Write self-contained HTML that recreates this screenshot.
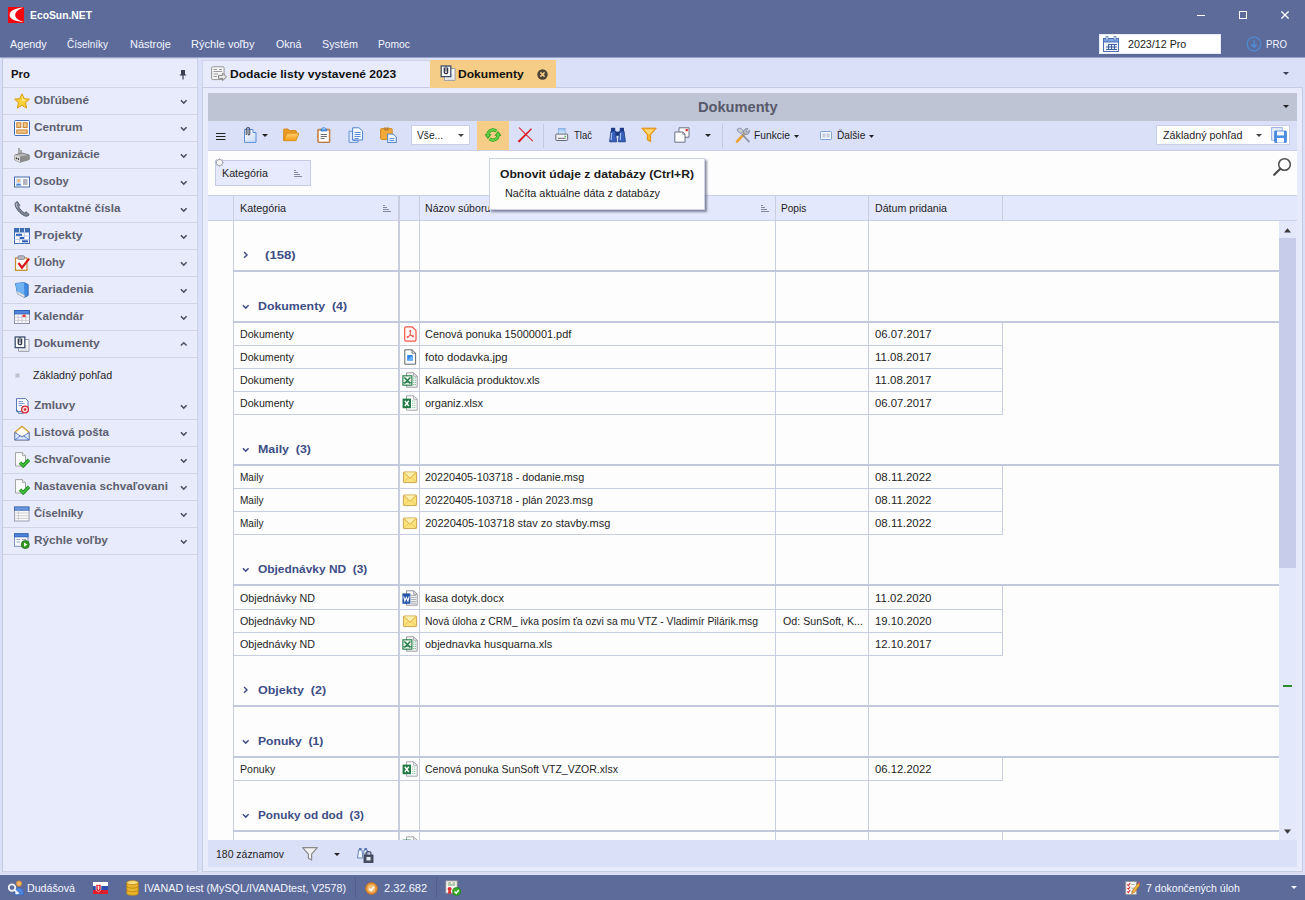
<!DOCTYPE html>
<html lang="sk">
<head>
<meta charset="utf-8">
<title>EcoSun.NET</title>
<style>
html,body{margin:0;padding:0;}
body{width:1305px;height:900px;overflow:hidden;position:relative;background:#d9e0f7;font-family:"Liberation Sans",sans-serif;font-size:11px;color:#1e1e1e;}
div,span,svg{position:absolute;box-sizing:border-box;}
.t{white-space:nowrap;line-height:16px;height:16px;transform-origin:0 50%;}
.hdr{left:0;top:0;width:1305px;height:58px;background:#5d6b9b;border-bottom:1px solid #98a2c6;}
.status{left:0;top:875px;width:1305px;height:25px;background:#5d6b9b;}
.side{left:2px;top:58px;width:196px;height:814px;background:#e7ebfc;border:1px solid #cbd1e8;border-left-color:#c3c9e0;}
.srow{left:0;width:194px;height:1px;background:#d0d5e8;}
.tabs{left:202px;top:58px;width:1101px;height:30px;background:#d9e0f7;}
.taboff{left:202px;top:60px;width:228px;height:28px;background:#e7ebfc;border:1px solid #cdd3ea;border-bottom:none;border-right:none;}
.tabon{left:430px;top:60px;width:126px;height:28px;background:#f6cd86;}
.content{left:202px;top:87px;width:1101px;height:785px;background:#e7ebfc;border:1px solid #c6cce4;}
.gtitle{left:208px;top:93px;width:1089px;height:28px;background:#bec4d4;}
.tbar{left:208px;top:121px;width:1089px;height:29px;background:#d9e0f8;}
.gpanel{left:208px;top:150px;width:1089px;height:45px;background:#fdfdfd;border-top:1px solid #c9cfe6;}
.ghead{left:208px;top:195px;width:1089px;height:26px;background:#e3e8fc;border-top:1px solid #c9cfe6;border-bottom:1px solid #c9cfe6;}
.grid{left:208px;top:221px;width:1071px;height:619px;background:#fdfdfd;overflow:hidden;}
.vl{width:1px;background:#c8cde0;}
.hl{height:1px;background:#c8cde0;}
.hl2{height:2px;background:#c3c9dc;}
.foot{left:208px;top:840px;width:1089px;height:27px;background:#d9e0f8;}
.sbar{left:1279px;top:221px;width:17px;height:619px;background:#e3e8fb;}
.thumb{left:1279px;top:238px;width:17px;height:330px;background:#c6cce9;}
.box{background:#fff;border:1px solid #c9cfe6;}

</style>
</head>
<body>
<div class="hdr"></div>
<svg style="left:8px;top:7px" width="16" height="16" viewBox="0 0 16 16"><rect width="16" height="16" fill="#f4060c"/><path d="M15.6 0.4 C8 0.8 1.6 3.6 1.6 8 C1.6 12 8 14.8 15.8 14.9 C10.6 13.4 7.2 11.2 7.2 8 C7.2 4.8 10.4 2.2 15.6 0.4 Z" fill="#fff"/></svg>
<span class="t" style="left:29.5px;top:7.0px;font-size:11px;color:#ffffff;font-weight:bold;transform:scaleX(0.9392);">EcoSun.NET</span>
<span class="t" style="left:9.6px;top:36.3px;font-size:11px;color:#f4f6ff;transform:scaleX(0.9836);">Agendy</span>
<span class="t" style="left:67.3px;top:36.3px;font-size:11px;color:#f4f6ff;transform:scaleX(0.9039);">Číselníky</span>
<span class="t" style="left:129.5px;top:36.3px;font-size:11px;color:#f4f6ff;transform:scaleX(0.9983);">Nástroje</span>
<span class="t" style="left:191.4px;top:36.3px;font-size:11px;color:#f4f6ff;transform:scaleX(1.0059);">Rýchle voľby</span>
<span class="t" style="left:275.6px;top:36.3px;font-size:11px;color:#f4f6ff;transform:scaleX(0.9621);">Okná</span>
<span class="t" style="left:321.7px;top:36.3px;font-size:11px;color:#f4f6ff;transform:scaleX(0.9785);">Systém</span>
<span class="t" style="left:377.5px;top:36.3px;font-size:11px;color:#f4f6ff;transform:scaleX(0.9314);">Pomoc</span>
<svg style="left:1197px;top:15px" width="8" height="1" viewBox="0 0 8 1"><rect width="8" height="1" fill="#fff"/></svg>
<svg style="left:1239px;top:11px" width="8" height="8" viewBox="0 0 8 8"><rect x="0.5" y="0.5" width="7" height="7" fill="none" stroke="#fff" stroke-width="1"/></svg>
<svg style="left:1281px;top:11px" width="8" height="8" viewBox="0 0 8 8"><path d="M0.4 0.4 L7.6 7.6 M7.6 0.4 L0.4 7.6" stroke="#fff" stroke-width="1.25"/></svg>
<div class="box" style="left:1098.5px;top:34px;width:122.5px;height:20px;border-color:#e8ebf7"></div>
<svg style="left:1103px;top:36px" width="16" height="16" viewBox="0 0 16 16"><rect x="0.5" y="2.5" width="15" height="13" fill="#f2f5fc" stroke="#4a6fb5"/><rect x="0.5" y="2.5" width="15" height="3.5" fill="#7fa4e0" stroke="#4a6fb5"/><rect x="3" y="0.5" width="2" height="3.5" fill="#dfe6f5" stroke="#4a6fb5" stroke-width="0.6"/><rect x="11" y="0.5" width="2" height="3.5" fill="#dfe6f5" stroke="#4a6fb5" stroke-width="0.6"/><path d="M5 8.5 H14 M3 11 H14 M3 13.5 H14 M5.5 8.5 V13.5 M8.5 8.5 V13.5 M11.5 8.5 V13.5" stroke="#3f62a8" stroke-width="1.1" fill="none"/></svg>
<span class="t" style="left:1127.7px;top:36.4px;font-size:11px;color:#1a1a1a;transform:scaleX(0.9727);">2023/12 Pro</span>
<svg style="left:1246px;top:36px" width="16" height="16" viewBox="0 0 16 16"><circle cx="8" cy="8" r="6.8" fill="none" stroke="#4f8bd2" stroke-width="1.2"/><path d="M8 4 V11 M5.2 8.2 L8 11.3 L10.8 8.2" fill="none" stroke="#4f8bd2" stroke-width="1.6"/></svg>
<span class="t" style="left:1265.6px;top:36.3px;font-size:11px;color:#f4f6ff;transform:scaleX(0.8765);">PRO</span>
<div class="side">
<div class="srow" style="top:28px"></div>
<div class="srow" style="top:55px"></div>
<div class="srow" style="top:82px"></div>
<div class="srow" style="top:109px"></div>
<div class="srow" style="top:136px"></div>
<div class="srow" style="top:163px"></div>
<div class="srow" style="top:190px"></div>
<div class="srow" style="top:217px"></div>
<div class="srow" style="top:244px"></div>
<div class="srow" style="top:271px"></div>
<div class="srow" style="top:298px"></div>
<div class="srow" style="top:360px"></div>
<div class="srow" style="top:387px"></div>
<div class="srow" style="top:414px"></div>
<div class="srow" style="top:441px"></div>
<div class="srow" style="top:468px"></div>
<div class="srow" style="top:495px"></div>
</div>
<span class="t" style="left:11.1px;top:66.0px;font-size:11px;color:#111;font-weight:bold;transform:scaleX(1.0303);">Pro</span>
<svg style="left:179px;top:70px" width="8" height="10" viewBox="0 0 8 10"><path d="M2 0.5 H6 M2.6 0.5 V4.6 M5.4 0.5 V4.6 M0.8 5 H7.2 M4 5 V9.5" stroke="#3a3f55" stroke-width="1.2" fill="none"/><rect x="2.6" y="0.5" width="2.8" height="4.4" fill="#3a3f55"/></svg>
<span class="t" style="left:34.1px;top:92.4px;font-size:11px;color:#5d5f6e;font-weight:bold;transform:scaleX(1.0577);">Obľúbené</span>
<svg style="left:14px;top:93px" width="16" height="16" viewBox="0 0 16 16"><path d="M8 0.8 L10.2 5.6 L15.4 6.2 L11.5 9.7 L12.6 15 L8 12.3 L3.4 15 L4.5 9.7 L0.6 6.2 L5.8 5.6 Z" fill="#fbd23a" stroke="#d89a10" stroke-width="1" stroke-linejoin="round"/><path d="M8 3 L9.5 6.4 L13 6.9 L8 8 Z" fill="#fff2a8" opacity="0.8"/></svg>
<svg style="left:180.1px;top:98.8px" width="8" height="6" viewBox="0 0 8 6"><path d="M0.9 1.2 L3.75 4.1 L6.6 1.2" fill="none" stroke="#4a4f63" stroke-width="1.45"/></svg>
<span class="t" style="left:34.1px;top:119.4px;font-size:11px;color:#5d5f6e;font-weight:bold;transform:scaleX(1.0744);">Centrum</span>
<svg style="left:14px;top:120px" width="16" height="16" viewBox="0 0 16 16"><rect x="0.5" y="0.5" width="15" height="15" rx="1" fill="#f7f9ff" stroke="#3f6db5"/><rect x="2.8" y="2.8" width="4" height="4.6" fill="#f3c98a" stroke="#c9802b" stroke-width="1"/><rect x="9.2" y="2.8" width="4" height="4.6" fill="#f3c98a" stroke="#c9802b" stroke-width="1"/><rect x="2.8" y="10" width="10.4" height="3.2" fill="#f3c98a" stroke="#c9802b" stroke-width="1"/></svg>
<svg style="left:180.1px;top:125.8px" width="8" height="6" viewBox="0 0 8 6"><path d="M0.9 1.2 L3.75 4.1 L6.6 1.2" fill="none" stroke="#4a4f63" stroke-width="1.45"/></svg>
<span class="t" style="left:34.1px;top:146.4px;font-size:11px;color:#5d5f6e;font-weight:bold;transform:scaleX(1.0552);">Organizácie</span>
<svg style="left:14px;top:147px" width="16" height="16" viewBox="0 0 16 16"><path d="M5 1 V7 M7 3 V7" stroke="#8a8a8a" stroke-width="1.3"/><path d="M0.8 8 L8 6 L15.2 8 V12.5 L6 15.2 L0.8 13 Z" fill="#b9b9b9" stroke="#6d6d6d" stroke-width="0.8"/><path d="M6 9.6 L15.2 8 V12.5 L6 15.2 Z" fill="#8d8d8d"/><path d="M0.8 8 L6 9.6 V15.2 L0.8 13 Z" fill="#d9d9d9"/><rect x="1.8" y="10.5" width="1.3" height="1.6" fill="#333"/><rect x="3.8" y="11.2" width="1.3" height="1.6" fill="#333"/></svg>
<svg style="left:180.1px;top:152.8px" width="8" height="6" viewBox="0 0 8 6"><path d="M0.9 1.2 L3.75 4.1 L6.6 1.2" fill="none" stroke="#4a4f63" stroke-width="1.45"/></svg>
<span class="t" style="left:34.1px;top:173.4px;font-size:11px;color:#5d5f6e;font-weight:bold;transform:scaleX(1.0136);">Osoby</span>
<svg style="left:14px;top:174px" width="16" height="16" viewBox="0 0 16 16"><rect x="0.5" y="3" width="15" height="10" fill="#fbfcff" stroke="#4a6caa"/><rect x="2" y="4.5" width="5.2" height="7" fill="#cfe0f7"/><circle cx="4.6" cy="6.6" r="1.6" fill="#e9b27a"/><path d="M2 11.5 C2 9 7.2 9 7.2 11.5 Z" fill="#3f7fd0"/><path d="M9 6 H13.5 M9 8 H13.5 M9 10 H13.5" stroke="#6a6f80" stroke-width="1"/></svg>
<svg style="left:180.1px;top:179.8px" width="8" height="6" viewBox="0 0 8 6"><path d="M0.9 1.2 L3.75 4.1 L6.6 1.2" fill="none" stroke="#4a4f63" stroke-width="1.45"/></svg>
<span class="t" style="left:34.1px;top:200.4px;font-size:11px;color:#5d5f6e;font-weight:bold;transform:scaleX(1.0638);">Kontaktné čísla</span>
<svg style="left:14px;top:201px" width="16" height="16" viewBox="0 0 16 16"><path d="M2 1.2 C0.6 2.2 0.8 4.5 2.3 7 C4 10 7 13.2 10.5 14.8 C12.6 15.6 14.6 15 15.2 13.6 L12.2 10.8 L10.4 12 C8.4 11 5.6 8 4.6 5.8 L5.8 4.4 L3.6 0.8 Z" fill="#7d8794" stroke="#4d5663" stroke-width="0.9" stroke-linejoin="round"/><path d="M2.6 2 C1.8 3 2.4 5 3.4 6.6" stroke="#c4cbd4" stroke-width="0.9" fill="none"/></svg>
<svg style="left:180.1px;top:206.8px" width="8" height="6" viewBox="0 0 8 6"><path d="M0.9 1.2 L3.75 4.1 L6.6 1.2" fill="none" stroke="#4a4f63" stroke-width="1.45"/></svg>
<span class="t" style="left:34.1px;top:227.4px;font-size:11px;color:#5d5f6e;font-weight:bold;transform:scaleX(1.1193);">Projekty</span>
<svg style="left:14px;top:228px" width="16" height="16" viewBox="0 0 16 16"><rect x="0.5" y="0.5" width="15" height="15" fill="#fdfdff" stroke="#3f6db5"/><rect x="0.5" y="0.5" width="15" height="4" fill="#3f6db5"/><path d="M5.5 0.5 V15.5 M10.5 0.5 V15.5 M0.5 8 H15.5 M0.5 11.5 H15.5" stroke="#b5c4e2" stroke-width="0.8"/><path d="M5.5 0.5 V4.5 M10.5 0.5 V4.5" stroke="#dfe8f8" stroke-width="0.8"/><rect x="2" y="5.8" width="6" height="2" fill="#2f62b8"/><rect x="6" y="9" width="4" height="2" fill="#2f62b8"/><rect x="8" y="12.3" width="6" height="2" fill="#2f62b8"/></svg>
<svg style="left:180.1px;top:233.8px" width="8" height="6" viewBox="0 0 8 6"><path d="M0.9 1.2 L3.75 4.1 L6.6 1.2" fill="none" stroke="#4a4f63" stroke-width="1.45"/></svg>
<span class="t" style="left:34.1px;top:254.4px;font-size:11px;color:#5d5f6e;font-weight:bold;transform:scaleX(1.0176);">Úlohy</span>
<svg style="left:14px;top:255px" width="16" height="16" viewBox="0 0 16 16"><rect x="1.5" y="3" width="11.5" height="12.3" fill="#fdfbf5" stroke="#c38a2e" stroke-width="1.2"/><rect x="4" y="0.8" width="6.5" height="3.6" rx="1" fill="#b9b9c8" stroke="#7c7c92" stroke-width="0.8"/><path d="M4.5 8 L8 12.6 L15.2 3.6" stroke="#d9141c" stroke-width="2.2" fill="none"/></svg>
<svg style="left:180.1px;top:260.8px" width="8" height="6" viewBox="0 0 8 6"><path d="M0.9 1.2 L3.75 4.1 L6.6 1.2" fill="none" stroke="#4a4f63" stroke-width="1.45"/></svg>
<span class="t" style="left:34.1px;top:281.4px;font-size:11px;color:#5d5f6e;font-weight:bold;transform:scaleX(1.0812);">Zariadenia</span>
<svg style="left:14px;top:282px" width="16" height="16" viewBox="0 0 16 16"><path d="M1.5 1.5 L10 0.6 L14.2 2.6 V13.4 L10.4 15.4 L3.5 11.6 Z" fill="#3f8be0" stroke="#2a62b0" stroke-width="0.8" stroke-linejoin="round"/><path d="M1.5 1.5 L10 0.6 L10.4 15.4 L3.5 11.6 Z" fill="#6fb3f3"/><path d="M3.5 11.6 L10.4 15.4 L10.4 13.2 L3.2 9.6 Z" fill="#f1f1f1" stroke="#b5b5b5" stroke-width="0.5"/></svg>
<svg style="left:180.1px;top:287.8px" width="8" height="6" viewBox="0 0 8 6"><path d="M0.9 1.2 L3.75 4.1 L6.6 1.2" fill="none" stroke="#4a4f63" stroke-width="1.45"/></svg>
<span class="t" style="left:34.1px;top:308.4px;font-size:11px;color:#5d5f6e;font-weight:bold;transform:scaleX(1.0599);">Kalendár</span>
<svg style="left:14px;top:309px" width="16" height="16" viewBox="0 0 16 16"><rect x="0.5" y="1.5" width="15" height="13" fill="#fbfbfd" stroke="#8b8fa5"/><rect x="0.5" y="1.5" width="15" height="3.4" fill="#4f86dc" stroke="#2f62b8"/><path d="M0.5 8.2 H15.5 M0.5 11.4 H15.5 M4.2 5 V14.5 M8 5 V14.5 M11.8 5 V14.5" stroke="#c5c7d2" stroke-width="0.9"/><rect x="8.6" y="5.6" width="3" height="2.4" fill="#e03a3a"/></svg>
<svg style="left:180.1px;top:314.8px" width="8" height="6" viewBox="0 0 8 6"><path d="M0.9 1.2 L3.75 4.1 L6.6 1.2" fill="none" stroke="#4a4f63" stroke-width="1.45"/></svg>
<span class="t" style="left:34.1px;top:335.4px;font-size:11px;color:#5d5f6e;font-weight:bold;transform:scaleX(1.0984);">Dokumenty</span>
<svg style="left:14px;top:336px" width="16" height="16" viewBox="0 0 16 16"><path d="M4.5 3.5 H15 V15.4 H4.5 Z" fill="#fafafa" stroke="#8f95a6" stroke-width="0.9"/><path d="M6.5 10 H13.5 M6.5 12 H13.5 M6.5 14 H13.5" stroke="#c5c8d2" stroke-width="0.8"/><rect x="1.2" y="1" width="9.6" height="10.6" fill="#fdfdfd" stroke="#3e4f6a" stroke-width="1.3"/><path d="M4.3 2.6 V7.6 C4.3 9 7.6 9 7.6 7.6 V2.6" fill="none" stroke="#2b3346" stroke-width="1.3"/><path d="M6 1 V6.6" stroke="#2b3346" stroke-width="1"/></svg>
<svg style="left:180.1px;top:341.4px" width="8" height="6" viewBox="0 0 8 6"><path d="M0.9 4.6 L3.75 1.7 L6.6 4.6" fill="none" stroke="#4a4f63" stroke-width="1.45"/></svg>
<span class="t" style="left:34.1px;top:397.4px;font-size:11px;color:#5d5f6e;font-weight:bold;transform:scaleX(1.0697);">Zmluvy</span>
<svg style="left:14px;top:398px" width="16" height="16" viewBox="0 0 16 16"><path d="M2.5 0.6 H11.5 L14 3 V13.5 H2.5 Z" fill="#fdfdff" stroke="#4a6caa" stroke-width="0.9"/><path d="M4.5 3.5 H9 M4.5 5.5 H10.5 M4.5 7.5 H8" stroke="#7f9bd0" stroke-width="1"/><path d="M2.5 11 L4.5 15.3 H9.5" fill="none" stroke="#4a6caa" stroke-width="0.9"/><circle cx="11" cy="11.5" r="3.4" fill="#fbe3e3" stroke="#d8262c" stroke-width="1.3"/><circle cx="11" cy="11.5" r="1.3" fill="#d8262c"/></svg>
<svg style="left:180.1px;top:403.8px" width="8" height="6" viewBox="0 0 8 6"><path d="M0.9 1.2 L3.75 4.1 L6.6 1.2" fill="none" stroke="#4a4f63" stroke-width="1.45"/></svg>
<span class="t" style="left:34.1px;top:424.4px;font-size:11px;color:#5d5f6e;font-weight:bold;transform:scaleX(1.0591);">Listová pošta</span>
<svg style="left:14px;top:425px" width="16" height="16" viewBox="0 0 16 16"><path d="M0.8 7 L8 1 L15.2 7 V15 H0.8 Z" fill="#f6c860" stroke="#c58a1e" stroke-width="0.9" stroke-linejoin="round"/><path d="M2.5 6.5 L8 2.4 L13.5 6.5 V11 H2.5 Z" fill="#fffdf5" stroke="#d9b36a" stroke-width="0.6"/><path d="M0.8 7.5 L8 12 L15.2 7.5 V15 H0.8 Z" fill="#dfe9fb" stroke="#4f74c4" stroke-width="0.9" stroke-linejoin="round"/><path d="M0.8 15 L6.4 10.8 M15.2 15 L9.6 10.8" stroke="#4f74c4" stroke-width="0.9"/></svg>
<svg style="left:180.1px;top:430.8px" width="8" height="6" viewBox="0 0 8 6"><path d="M0.9 1.2 L3.75 4.1 L6.6 1.2" fill="none" stroke="#4a4f63" stroke-width="1.45"/></svg>
<span class="t" style="left:34.1px;top:451.4px;font-size:11px;color:#5d5f6e;font-weight:bold;transform:scaleX(1.0713);">Schvaľovanie</span>
<svg style="left:14px;top:452px" width="16" height="16" viewBox="0 0 16 16"><path d="M1.5 0.6 H8.5 L11.5 3.6 V14 H1.5 Z" fill="#fcfcfc" stroke="#9a9a9a" stroke-width="0.9"/><path d="M8.5 0.6 V3.6 H11.5" fill="#e9e9e9" stroke="#9a9a9a" stroke-width="0.8"/><path d="M6 10.6 L9.2 13.8 L15 7.8" stroke="#1f8a1f" stroke-width="3.4" fill="none"/><path d="M6 10.6 L9.2 13.8 L15 7.8" stroke="#45c23a" stroke-width="1.6" fill="none"/></svg>
<svg style="left:180.1px;top:457.8px" width="8" height="6" viewBox="0 0 8 6"><path d="M0.9 1.2 L3.75 4.1 L6.6 1.2" fill="none" stroke="#4a4f63" stroke-width="1.45"/></svg>
<span class="t" style="left:34.1px;top:478.4px;font-size:11px;color:#5d5f6e;font-weight:bold;transform:scaleX(1.0693);">Nastavenia schvaľovani</span>
<svg style="left:14px;top:479px" width="16" height="16" viewBox="0 0 16 16"><path d="M1.5 0.6 H8.5 L11.5 3.6 V14 H1.5 Z" fill="#fcfcfc" stroke="#9a9a9a" stroke-width="0.9"/><path d="M8.5 0.6 V3.6 H11.5" fill="#e9e9e9" stroke="#9a9a9a" stroke-width="0.8"/><path d="M6 10.6 L9.2 13.8 L15 7.8" stroke="#1f8a1f" stroke-width="3.4" fill="none"/><path d="M6 10.6 L9.2 13.8 L15 7.8" stroke="#45c23a" stroke-width="1.6" fill="none"/></svg>
<svg style="left:180.1px;top:484.8px" width="8" height="6" viewBox="0 0 8 6"><path d="M0.9 1.2 L3.75 4.1 L6.6 1.2" fill="none" stroke="#4a4f63" stroke-width="1.45"/></svg>
<span class="t" style="left:34.1px;top:505.4px;font-size:11px;color:#5d5f6e;font-weight:bold;transform:scaleX(1.0204);">Číselníky</span>
<svg style="left:14px;top:506px" width="16" height="16" viewBox="0 0 16 16"><rect x="0.5" y="1" width="14.5" height="14" fill="#fbfbfb" stroke="#9a9eb0"/><rect x="0.5" y="1" width="14.5" height="3.2" fill="#6f9be6" stroke="#3f6db5"/><path d="M0.5 7 H15 M0.5 9.7 H15 M0.5 12.4 H15 M4.5 4.4 V15" stroke="#c9c9cf" stroke-width="0.9"/></svg>
<svg style="left:180.1px;top:511.8px" width="8" height="6" viewBox="0 0 8 6"><path d="M0.9 1.2 L3.75 4.1 L6.6 1.2" fill="none" stroke="#4a4f63" stroke-width="1.45"/></svg>
<span class="t" style="left:34.1px;top:532.4px;font-size:11px;color:#5d5f6e;font-weight:bold;transform:scaleX(1.0703);">Rýchle voľby</span>
<svg style="left:14px;top:533px" width="16" height="16" viewBox="0 0 16 16"><rect x="0.5" y="0.8" width="13.5" height="12.5" fill="#fbfbfd" stroke="#7a8fbb"/><rect x="0.5" y="0.8" width="13.5" height="3" fill="#4f86dc" stroke="#2f62b8"/><path d="M2.5 6.5 H6 M2.5 9 H6 M8 6.5 H12" stroke="#9aa4bd" stroke-width="1.2"/><circle cx="11.3" cy="11.6" r="4" fill="#2f9a1f" stroke="#1d6d12" stroke-width="0.8"/><path d="M10 9.4 L13.3 11.6 L10 13.8 Z" fill="#fff"/></svg>
<svg style="left:180.1px;top:538.8px" width="8" height="6" viewBox="0 0 8 6"><path d="M0.9 1.2 L3.75 4.1 L6.6 1.2" fill="none" stroke="#4a4f63" stroke-width="1.45"/></svg>
<div style="left:15px;top:373px;width:5px;height:5px;background:#bfc3d0;border:1px solid #d5d8e2"></div>
<span class="t" style="left:32.9px;top:367.0px;font-size:11px;color:#1e1e1e;transform:scaleX(0.9706);">Základný pohľad</span>
<div class="tabs"></div>
<div class="taboff"></div>
<div class="content"></div>
<div class="tabon"></div>
<svg style="left:211px;top:66px" width="16" height="16" viewBox="0 0 16 16"><rect x="0.6" y="0.8" width="12.5" height="12.8" rx="1" fill="#f6f6f6" stroke="#8a8a8a" stroke-width="0.9"/><path d="M2.5 3.5 H6 M8 3.5 H11 M2.5 5.5 H11 M2.5 8 H7 M2.5 10.5 H6" stroke="#9a9a9a" stroke-width="1.1"/><path d="M7.5 9.4 H11.6 V7.2 L15.6 10.9 L11.6 14.6 V12.4 H7.5 Z" fill="#e9e9e9" stroke="#7a7a7a" stroke-width="0.9" stroke-linejoin="round"/></svg>
<span class="t" style="left:230.3px;top:66.0px;font-size:11px;color:#111;font-weight:bold;transform:scaleX(1.0959);">Dodacie listy vystavené 2023</span>
<svg style="left:439.5px;top:65px" width="16" height="16" viewBox="0 0 16 16"><path d="M4.5 3.5 H15 V15.4 H4.5 Z" fill="#fafafa" stroke="#8f95a6" stroke-width="0.9"/><path d="M6.5 10 H13.5 M6.5 12 H13.5 M6.5 14 H13.5" stroke="#c5c8d2" stroke-width="0.8"/><rect x="1.2" y="1" width="9.6" height="10.6" fill="#fdfdfd" stroke="#3e4f6a" stroke-width="1.3"/><path d="M4.3 2.6 V7.6 C4.3 9 7.6 9 7.6 7.6 V2.6" fill="none" stroke="#2b3346" stroke-width="1.3"/><path d="M6 1 V6.6" stroke="#2b3346" stroke-width="1"/></svg>
<span class="t" style="left:458.2px;top:66.0px;font-size:11px;color:#111;font-weight:bold;transform:scaleX(1.0967);">Dokumenty</span>
<svg style="left:536.5px;top:68.5px" width="11" height="11" viewBox="0 0 11 11"><circle cx="5.5" cy="5.5" r="5.2" fill="#4b4436"/><path d="M3.4 3.4 L7.6 7.6 M7.6 3.4 L3.4 7.6" stroke="#f6cd86" stroke-width="1.5"/></svg>
<svg style="left:1283px;top:72px" width="6" height="3" viewBox="0 0 6 3"><path d="M0 0 H6 L3 3 Z" fill="#3a3f55"/></svg>
<div class="gtitle"></div>
<span class="t" style="left:698.4px;top:99.0px;font-size:14.5px;color:#58596a;font-weight:bold;transform:scaleX(1.0080);">Dokumenty</span>
<svg style="left:1282.5px;top:105px" width="6" height="3" viewBox="0 0 6 3"><path d="M0 0 H6 L3 3 Z" fill="#222"/></svg>
<div class="tbar"></div>
<svg style="left:216px;top:133px" width="10" height="8" viewBox="0 0 10 8"><path d="M0 0.5 H9.5 M0 3.5 H9.5 M0 6.5 H9.5" stroke="#222" stroke-width="1.05"/></svg>
<svg style="left:243px;top:127px" width="16" height="16" viewBox="0 0 16 16"><defs><linearGradient id="gcd" x1="0" y1="0" x2="0.6" y2="1"><stop offset="0" stop-color="#ffffff"/><stop offset="1" stop-color="#cddff8"/></linearGradient></defs><path d="M1.5 2.5 H10 V5.5 H13 V15.4 H1.5 Z" fill="url(#gcd)" stroke="#5b8ed6" stroke-width="1"/><path d="M3.2 8 V2.4 C3.2 0 6.8 0 6.8 2.4 V6.8 C6.8 8.2 5 8.2 5 6.8 V3" fill="none" stroke="#4a4f5e" stroke-width="1.1"/></svg>
<svg style="left:261.5px;top:134px" width="6" height="3" viewBox="0 0 6 3"><path d="M0 0 H6 L3 3 Z" fill="#222"/></svg>
<svg style="left:283px;top:127px" width="16" height="16" viewBox="0 0 16 16"><defs><linearGradient id="gfo" x1="0" y1="0" x2="0" y2="1"><stop offset="0" stop-color="#fdd070"/><stop offset="1" stop-color="#f39c14"/></linearGradient></defs><path d="M0.7 13.4 V2.8 Q0.7 2 1.5 2 H5 L6.4 3.6 H12.6 Q13.3 3.6 13.3 4.3 V6.4" fill="#eb9c24" stroke="#d28310" stroke-width="0.9" stroke-linejoin="round"/><path d="M0.7 13.7 L3.8 6.2 H16 L12.9 13.7 Z" fill="url(#gfo)" stroke="#dc8c12" stroke-width="0.9" stroke-linejoin="round"/></svg>
<svg style="left:316px;top:127px" width="16" height="16" viewBox="0 0 16 16"><rect x="1.7" y="2.2" width="12.2" height="13.3" rx="0.8" fill="#d98c4a" stroke="#b36e2c" stroke-width="0.8"/><rect x="2.8" y="3.6" width="10" height="11" fill="#fefefe"/><path d="M4.6 7.5 H11 M4.6 9.5 H11 M4.6 11.5 H8.6" stroke="#6f6f6f" stroke-width="1"/><path d="M4.8 4 C4.8 -0.4 10.8 -0.4 10.8 4 Z" fill="#4f9af0" stroke="#2f70cc" stroke-width="0.7"/><path d="M6.4 1.8 H9.2" stroke="#cfe4ff" stroke-width="0.9"/></svg>
<svg style="left:348px;top:127px" width="16" height="16" viewBox="0 0 16 16"><path d="M1 4.2 H5 V13.4 H10 V15.4 H1 Z" fill="#dde9fb" stroke="#5a8cd8" stroke-width="0.9"/><path d="M4.6 0.8 H11 L14.6 4 V13 H4.6 Z" fill="#f4f8ff" stroke="#3f76cc" stroke-width="0.9"/><path d="M6.6 5.5 H12.6 M6.6 7.5 H12.6 M6.6 9.5 H12.6 M6.6 11.5 H10.6" stroke="#5a8cd8" stroke-width="1"/></svg>
<svg style="left:380px;top:127px" width="17" height="16" viewBox="0 0 17 16"><rect x="0.6" y="1.6" width="11.6" height="10.8" rx="1" fill="#f3aa38" stroke="#cf8412" stroke-width="0.9"/><rect x="3.8" y="0.5" width="5.2" height="3" fill="#bf8230"/><path d="M7.6 7 H13 L16.3 10 V15.5 H7.6 Z" fill="#f0f5ff" stroke="#3f76cc" stroke-width="0.9"/><path d="M9.4 11.5 H14.4 M9.4 13.5 H14.4" stroke="#5a8cd8" stroke-width="1"/></svg>
<div class="box" style="left:411px;top:125px;width:59px;height:20px"></div>
<span class="t" style="left:416.9px;top:126.7px;font-size:11px;color:#1e1e1e;transform:scaleX(0.9280);">Vše...</span>
<svg style="left:457.7px;top:134px" width="6" height="3" viewBox="0 0 6 3"><path d="M0 0 H6 L3 3 Z" fill="#444"/></svg>
<div style="left:477px;top:121px;width:32px;height:29px;background:#f6cd86"></div>
<svg style="left:485px;top:127px" width="16" height="16" viewBox="0 0 16 16"><g fill="none" stroke="#2a981d" stroke-width="3.2"><path d="M11.41 4.21 A5.1 5.1 0 0 0 2.90 8.00"/><path d="M4.59 11.79 A5.1 5.1 0 0 0 13.10 8.00"/></g><path d="M-0.6 7.2 H6.6 L2.9 12 Z M9.4 8.8 H16.6 L13.1 4 Z" fill="#2a981d"/><g fill="none" stroke="#5fd043" stroke-width="2"><path d="M11.41 4.21 A5.1 5.1 0 0 0 2.90 8.00"/><path d="M4.59 11.79 A5.1 5.1 0 0 0 13.10 8.00"/></g><path d="M0.8 7.8 H5.2 L2.9 10.8 Z M10.8 8.2 H15.2 L13.1 5.2 Z" fill="#5fd043"/></svg>
<svg style="left:516.8px;top:127.3px" width="16" height="16" viewBox="0 0 16 16"><path d="M14 1.2 L15 2 C11 6.5 6 11.5 2.4 15.4 L0.6 14.2 C4.5 10.4 10 5.2 14 1.2 Z" fill="#d8141c"/><path d="M2.4 0.8 C6 4.6 11 9.6 15.6 13.8" stroke="#dc2a30" stroke-width="1.1" fill="none" stroke-linecap="round"/></svg>
<div class="vl" style="left:543px;top:124px;height:24px;background:#c3c9e0"></div>
<svg style="left:555.3px;top:127.8px" width="13.5" height="13.5" viewBox="0 0 16 16"><defs><linearGradient id="gpr" x1="0" y1="0" x2="0" y2="1"><stop offset="0" stop-color="#8fc0f5"/><stop offset="1" stop-color="#eef6ff"/></linearGradient></defs><rect x="4" y="0.6" width="8" height="7.4" fill="url(#gpr)" stroke="#7fa8dc" stroke-width="0.8"/><path d="M1 8.2 Q1 7.2 2 7.2 H14 Q15 7.2 15 8.2 V13.6 Q15 14.8 13.8 14.8 H2.2 Q1 14.8 1 13.6 Z" fill="#f3f4f7" stroke="#4a4e5a" stroke-width="1"/><path d="M3.4 12.2 H12.6" stroke="#5a5e6a" stroke-width="1.1"/><rect x="11.2" y="9.2" width="1.8" height="1.4" fill="#2fb52a"/></svg>
<span class="t" style="left:574.2px;top:126.7px;font-size:11px;color:#1e1e1e;transform:scaleX(0.8662);">Tlač</span>
<svg style="left:608.5px;top:127px" width="17" height="16" viewBox="0 0 17 16"><rect x="2" y="0.8" width="4.2" height="4" fill="#1d3d8a"/><rect x="10.8" y="0.8" width="4.2" height="4" fill="#1d3d8a"/><path d="M2 4 H6.4 L7.6 14.8 H0.6 Z" fill="#3560bd" stroke="#1b387d" stroke-width="0.8"/><path d="M10.6 4 H15 L16.4 14.8 H9.4 Z" fill="#3560bd" stroke="#1b387d" stroke-width="0.8"/><rect x="6.6" y="4.6" width="3.8" height="4.2" fill="#1b387d"/><path d="M2.6 6 L2.2 13 M11.6 6 L11.2 13" stroke="#a9c2f2" stroke-width="1.2"/></svg>
<svg style="left:641px;top:127px" width="16" height="16" viewBox="0 0 16 16"><path d="M0.8 1.2 H15.2 L9.6 7.8 V14.6 L6.4 13 V7.8 Z" fill="#f8b62e" stroke="#e08c10" stroke-width="1" stroke-linejoin="round"/><path d="M3.2 2.4 H12.8 L8 7.6 Z" fill="#fdde88" opacity="0.85"/></svg>
<svg style="left:673.5px;top:127px" width="16" height="16" viewBox="0 0 16 16"><path d="M5 0.8 H15 V10.2 H5 Z" fill="#fdfdfd" stroke="#5f6577" stroke-width="0.9"/><path d="M0.8 5 H8.8 L11 7.2 V15.2 H0.8 Z" fill="#fdfdfd" stroke="#5f6577" stroke-width="0.9"/><path d="M8.8 5 V7.2 H11" fill="none" stroke="#5f6577" stroke-width="0.7"/><rect x="11.6" y="2" width="2.2" height="2.2" fill="#e0262b"/></svg>
<svg style="left:705.4px;top:134px" width="6" height="3" viewBox="0 0 6 3"><path d="M0 0 H6 L3 3 Z" fill="#222"/></svg>
<div class="vl" style="left:722px;top:124px;height:24px;background:#c3c9e0"></div>
<svg style="left:734.5px;top:127px" width="16" height="16" viewBox="0 0 16 16"><path d="M2 14.6 L9.6 6.4" stroke="#f0a030" stroke-width="2.6" stroke-linecap="round"/><path d="M9 7 C7.6 4.4 9.6 1 13 1.6 L11 3.8 L12.2 5.2 L14.4 3.2 C15 6.4 12 8.4 9 7 Z" fill="#b9bec9" stroke="#6d7385" stroke-width="0.7"/><path d="M14 14.6 L7.4 7.6" stroke="#8a8f9c" stroke-width="1.6" stroke-linecap="round"/><path d="M2 2.4 L5.6 1 L8.4 4 L6.2 6.6 L3.4 5 Z" fill="#c9cdd6" stroke="#6d7385" stroke-width="0.7"/></svg>
<span class="t" style="left:754.4px;top:126.7px;font-size:11px;color:#1e1e1e;transform:scaleX(0.9317);">Funkcie</span>
<svg style="left:794px;top:134.5px" width="5" height="3" viewBox="0 0 5 3"><path d="M0 0 H5 L2.5 3 Z" fill="#222"/></svg>
<svg style="left:819.8px;top:131px" width="12" height="9" viewBox="0 0 12 9"><rect x="0.5" y="0.5" width="11" height="8" rx="0.8" fill="#f6f8fd" stroke="#7fa0d4"/><rect x="2.4" y="2.4" width="3" height="4.2" fill="#c3cde2"/><rect x="6.6" y="2.4" width="3" height="4.2" fill="#c3cde2"/></svg>
<span class="t" style="left:837.3px;top:126.7px;font-size:11px;color:#1e1e1e;transform:scaleX(0.9255);">Ďalšie</span>
<svg style="left:869px;top:134.5px" width="5" height="3" viewBox="0 0 5 3"><path d="M0 0 H5 L2.5 3 Z" fill="#222"/></svg>
<div class="box" style="left:1156px;top:125px;width:134px;height:20px"></div>
<span class="t" style="left:1162.5px;top:126.7px;font-size:11px;color:#1e1e1e;transform:scaleX(0.9755);">Základný pohľad</span>
<svg style="left:1255.7px;top:134px" width="6" height="3" viewBox="0 0 6 3"><path d="M0 0 H6 L3 3 Z" fill="#444"/></svg>
<svg style="left:1270.5px;top:127px" width="16" height="16" viewBox="0 0 16 16"><rect x="0.6" y="0.6" width="10.6" height="12.6" fill="#e4ecfb" stroke="#8fade3" stroke-width="0.9"/><rect x="3.6" y="4" width="11.8" height="11.6" rx="0.8" fill="#4b8fe2" stroke="#3273c8" stroke-width="0.7"/><rect x="6" y="4.4" width="7" height="4" fill="#f6f9ff"/><rect x="6" y="11" width="7" height="4.6" fill="#f6f9ff"/></svg>
<div class="gpanel"></div>
<div style="left:215px;top:160px;width:96px;height:26px;background:#e6eafc;border:1px solid #c5cbe3"></div>
<svg style="left:215px;top:157.5px" width="9" height="9" viewBox="0 0 9 9"><circle cx="4.5" cy="4.5" r="3.2" fill="#f4f4f4" stroke="#a5a8b2" stroke-width="1"/><path d="M4.5 0.3 V1.8 M4.5 7.2 V8.7 M0.3 4.5 H1.8 M7.2 4.5 H8.7 M1.5 1.5 L2.5 2.5 M6.5 6.5 L7.5 7.5 M7.5 1.5 L6.5 2.5 M1.5 7.5 L2.5 6.5" stroke="#a5a8b2" stroke-width="1"/></svg>
<span class="t" style="left:221.6px;top:164.8px;font-size:11px;color:#1e1e1e;transform:scaleX(0.9747);">Kategória</span>
<svg style="left:294.2px;top:170px" width="9" height="8" viewBox="0 0 9 8"><path d="M0 0.5 H2 M0 2.5 H4 M0 4.5 H6 M0 6.5 H8" stroke="#858b9e" stroke-width="1"/></svg>
<svg style="left:1273px;top:157px" width="19" height="19" viewBox="0 0 19 19"><circle cx="11.5" cy="7.5" r="5.8" fill="none" stroke="#4c4c4c" stroke-width="1.5"/><path d="M7.3 11.7 L1.2 17.8" stroke="#4c4c4c" stroke-width="2.2" stroke-linecap="round"/></svg>
<div class="ghead"></div>
<div class="vl" style="left:233px;top:196px;height:25px"></div>
<div class="vl" style="left:398px;top:196px;height:25px"></div>
<div class="vl" style="left:399px;top:196px;height:25px"></div>
<div class="vl" style="left:419px;top:196px;height:25px"></div>
<div class="vl" style="left:775px;top:196px;height:25px"></div>
<div class="vl" style="left:868px;top:196px;height:25px"></div>
<div class="vl" style="left:1002px;top:196px;height:25px"></div>
<span class="t" style="left:239.6px;top:200.3px;font-size:11px;color:#1e1e1e;transform:scaleX(0.9789);">Kategória</span>
<svg style="left:382.6px;top:205px" width="9" height="8" viewBox="0 0 9 8"><path d="M0 0.5 H2 M0 2.5 H4 M0 4.5 H6 M0 6.5 H8" stroke="#858b9e" stroke-width="1"/></svg>
<span class="t" style="left:425.2px;top:200.3px;font-size:11px;color:#1e1e1e;transform:scaleX(0.9621);">Názov súboru</span>
<svg style="left:761px;top:205px" width="9" height="8" viewBox="0 0 9 8"><path d="M0 0.5 H2 M0 2.5 H4 M0 4.5 H6 M0 6.5 H8" stroke="#858b9e" stroke-width="1"/></svg>
<span class="t" style="left:781.4px;top:200.3px;font-size:11px;color:#1e1e1e;transform:scaleX(0.9190);">Popis</span>
<span class="t" style="left:874.5px;top:200.3px;font-size:11px;color:#1e1e1e;transform:scaleX(0.9652);">Dátum pridania</span>
<div class="grid"></div>
<div class="vl" style="left:233px;top:221px;height:51px"></div>
<div class="vl" style="left:398px;top:221px;height:51px"></div>
<div class="vl" style="left:399px;top:221px;height:51px"></div>
<div class="vl" style="left:419px;top:221px;height:51px"></div>
<div class="vl" style="left:775px;top:221px;height:51px"></div>
<div class="vl" style="left:868px;top:221px;height:51px"></div>
<div class="hl2" style="left:233px;top:270px;width:1046px"></div>
<svg style="left:243.2px;top:251.2px" width="6" height="8" viewBox="0 0 6 8"><path d="M1.1 1 L4 3.9 L1.1 6.8" fill="none" stroke="#3d4d86" stroke-width="1.45"/></svg>
<span class="t" style="left:264.7px;top:246.7px;font-size:11px;color:#3d4d86;font-weight:bold;transform:scaleX(1.1951);">(158)</span>
<div class="vl" style="left:233px;top:272px;height:51px"></div>
<div class="vl" style="left:398px;top:272px;height:51px"></div>
<div class="vl" style="left:399px;top:272px;height:51px"></div>
<div class="vl" style="left:419px;top:272px;height:51px"></div>
<div class="vl" style="left:775px;top:272px;height:51px"></div>
<div class="vl" style="left:868px;top:272px;height:51px"></div>
<div class="hl2" style="left:233px;top:321px;width:1046px"></div>
<svg style="left:242.2px;top:303.7px" width="8" height="6" viewBox="0 0 8 6"><path d="M0.9 1.2 L3.75 4.1 L6.6 1.2" fill="none" stroke="#3d4d86" stroke-width="1.45"/></svg>
<span class="t" style="left:258.3px;top:297.7px;font-size:11px;color:#3d4d86;font-weight:bold;transform:scaleX(1.1199);">Dokumenty&nbsp; (4)</span>
<div class="vl" style="left:233px;top:323px;height:23px"></div>
<div class="vl" style="left:398px;top:323px;height:23px"></div>
<div class="vl" style="left:399px;top:323px;height:23px"></div>
<div class="vl" style="left:419px;top:323px;height:23px"></div>
<div class="vl" style="left:775px;top:323px;height:23px"></div>
<div class="vl" style="left:868px;top:323px;height:23px"></div>
<div class="vl" style="left:1002px;top:323px;height:23px"></div>
<div class="hl" style="left:233px;top:345px;width:770px"></div>
<span class="t" style="left:239.6px;top:326.0px;font-size:11px;color:#1e1e1e;transform:scaleX(0.9669);">Dokumenty</span>
<svg style="left:401.8px;top:326px" width="16" height="16" viewBox="0 0 16 16"><path d="M4 0.9 H10.2 L14 4.6 V13.8 Q14 15.1 12.7 15.1 H4 Q2.7 15.1 2.7 13.8 V2.2 Q2.7 0.9 4 0.9 Z" fill="#fff7f6" stroke="#f2584b" stroke-width="1.2"/><circle cx="8.3" cy="5" r="1.05" fill="#f2584b"/><circle cx="5.7" cy="11" r="1.05" fill="#f2584b"/><circle cx="11" cy="10.2" r="1.05" fill="#f2584b"/><path d="M8.3 5 C8.4 7 8 8.6 8.2 8.8 C7.4 10 6.6 10.6 5.7 11 M8.2 8.8 C9.2 9.6 10 10 11 10.2" fill="none" stroke="#f2584b" stroke-width="1.1"/></svg>
<span class="t" style="left:425.2px;top:326.0px;font-size:11px;color:#1e1e1e;transform:scaleX(0.9925);">Cenová ponuka 15000001.pdf</span>
<span class="t" style="left:874.5px;top:326.0px;font-size:11px;color:#1e1e1e;transform:scaleX(1.0261);">06.07.2017</span>
<div class="vl" style="left:233px;top:346px;height:23px"></div>
<div class="vl" style="left:398px;top:346px;height:23px"></div>
<div class="vl" style="left:399px;top:346px;height:23px"></div>
<div class="vl" style="left:419px;top:346px;height:23px"></div>
<div class="vl" style="left:775px;top:346px;height:23px"></div>
<div class="vl" style="left:868px;top:346px;height:23px"></div>
<div class="vl" style="left:1002px;top:346px;height:23px"></div>
<div class="hl" style="left:233px;top:368px;width:770px"></div>
<span class="t" style="left:239.6px;top:349.0px;font-size:11px;color:#1e1e1e;transform:scaleX(0.9669);">Dokumenty</span>
<svg style="left:401.8px;top:349px" width="16" height="16" viewBox="0 0 16 16"><path d="M2.8 0.8 H10 L13.6 4.2 V15.2 H2.8 Z" fill="#fdfdfd" stroke="#55585f" stroke-width="0.9"/><path d="M10 0.8 V4.2 H13.6" fill="none" stroke="#55585f" stroke-width="0.8"/><rect x="5.2" y="6" width="5.6" height="5.6" fill="#2f86f0"/><path d="M5.2 11.6 L10.8 6 V11.6 Z" fill="#66b4ff"/></svg>
<span class="t" style="left:425.2px;top:349.0px;font-size:11px;color:#1e1e1e;transform:scaleX(1.0231);">foto dodavka.jpg</span>
<span class="t" style="left:874.5px;top:349.0px;font-size:11px;color:#1e1e1e;transform:scaleX(1.0415);">11.08.2017</span>
<div class="vl" style="left:233px;top:369px;height:23px"></div>
<div class="vl" style="left:398px;top:369px;height:23px"></div>
<div class="vl" style="left:399px;top:369px;height:23px"></div>
<div class="vl" style="left:419px;top:369px;height:23px"></div>
<div class="vl" style="left:775px;top:369px;height:23px"></div>
<div class="vl" style="left:868px;top:369px;height:23px"></div>
<div class="vl" style="left:1002px;top:369px;height:23px"></div>
<div class="hl" style="left:233px;top:391px;width:770px"></div>
<span class="t" style="left:239.6px;top:372.0px;font-size:11px;color:#1e1e1e;transform:scaleX(0.9669);">Dokumenty</span>
<svg style="left:401.8px;top:372px" width="16" height="16" viewBox="0 0 16 16"><path d="M4.5 0.8 H11.6 L15.2 4.2 V15.2 H4.5 Z" fill="#fdfdfd" stroke="#8e9196" stroke-width="0.9"/><path d="M11.6 0.8 V4.2 H15.2" fill="none" stroke="#8e9196" stroke-width="0.8"/><path d="M11 6 H14 M11 8.2 H14 M11 10.4 H14 M11 12.6 H14" stroke="#6fb98c" stroke-width="1" stroke-dasharray="1.2 0.6"/><rect x="0.9" y="3.8" width="9" height="9.4" fill="#eef7f0" stroke="#1f7a43" stroke-width="1.1"/><path d="M2.4 5.4 L8.4 11.6 M8.4 5.4 L2.4 11.6" stroke="#1f7a43" stroke-width="1.4"/><path d="M0.9 10.6 H9.9" stroke="#1f7a43" stroke-width="0.7"/></svg>
<span class="t" style="left:425.2px;top:372.0px;font-size:11px;color:#1e1e1e;transform:scaleX(0.9788);">Kalkulácia produktov.xls</span>
<span class="t" style="left:874.5px;top:372.0px;font-size:11px;color:#1e1e1e;transform:scaleX(1.0415);">11.08.2017</span>
<div class="vl" style="left:233px;top:392px;height:23px"></div>
<div class="vl" style="left:398px;top:392px;height:23px"></div>
<div class="vl" style="left:399px;top:392px;height:23px"></div>
<div class="vl" style="left:419px;top:392px;height:23px"></div>
<div class="vl" style="left:775px;top:392px;height:23px"></div>
<div class="vl" style="left:868px;top:392px;height:23px"></div>
<div class="vl" style="left:1002px;top:392px;height:23px"></div>
<div class="hl" style="left:233px;top:414px;width:770px"></div>
<span class="t" style="left:239.6px;top:395.0px;font-size:11px;color:#1e1e1e;transform:scaleX(0.9669);">Dokumenty</span>
<svg style="left:401.8px;top:395px" width="16" height="16" viewBox="0 0 16 16"><path d="M4.5 0.8 H11.6 L15.2 4.2 V15.2 H4.5 Z" fill="#fdfdfd" stroke="#9a9da3" stroke-width="0.9"/><path d="M11.6 0.8 V4.2 H15.2" fill="none" stroke="#9a9da3" stroke-width="0.8"/><path d="M10 6 H14 M10 8.2 H14 M10 10.4 H14 M10 12.6 H14" stroke="#8fcaa5" stroke-width="1" stroke-dasharray="1.2 0.6"/><rect x="0.6" y="3.6" width="8.4" height="9.6" fill="#1f7a43"/><path d="M2.8 5.8 L6.8 11 M6.8 5.8 L2.8 11" stroke="#fff" stroke-width="1.4"/></svg>
<span class="t" style="left:425.2px;top:395.0px;font-size:11px;color:#1e1e1e;transform:scaleX(0.9987);">organiz.xlsx</span>
<span class="t" style="left:874.5px;top:395.0px;font-size:11px;color:#1e1e1e;transform:scaleX(1.0261);">06.07.2017</span>
<div class="vl" style="left:233px;top:415px;height:51px"></div>
<div class="vl" style="left:398px;top:415px;height:51px"></div>
<div class="vl" style="left:399px;top:415px;height:51px"></div>
<div class="vl" style="left:419px;top:415px;height:51px"></div>
<div class="vl" style="left:775px;top:415px;height:51px"></div>
<div class="vl" style="left:868px;top:415px;height:51px"></div>
<div class="hl2" style="left:233px;top:464px;width:1046px"></div>
<svg style="left:242.2px;top:446.7px" width="8" height="6" viewBox="0 0 8 6"><path d="M0.9 1.2 L3.75 4.1 L6.6 1.2" fill="none" stroke="#3d4d86" stroke-width="1.45"/></svg>
<span class="t" style="left:258.3px;top:440.7px;font-size:11px;color:#3d4d86;font-weight:bold;transform:scaleX(1.1258);">Maily&nbsp; (3)</span>
<div class="vl" style="left:233px;top:466px;height:23px"></div>
<div class="vl" style="left:398px;top:466px;height:23px"></div>
<div class="vl" style="left:399px;top:466px;height:23px"></div>
<div class="vl" style="left:419px;top:466px;height:23px"></div>
<div class="vl" style="left:775px;top:466px;height:23px"></div>
<div class="vl" style="left:868px;top:466px;height:23px"></div>
<div class="vl" style="left:1002px;top:466px;height:23px"></div>
<div class="hl" style="left:233px;top:488px;width:770px"></div>
<span class="t" style="left:239.6px;top:469.0px;font-size:11px;color:#1e1e1e;transform:scaleX(0.9115);">Maily</span>
<svg style="left:401.8px;top:469px" width="16" height="16" viewBox="0 0 16 16"><rect x="1.4" y="3" width="13.2" height="10.6" rx="0.8" fill="#fbe27c" stroke="#c9a552" stroke-width="1"/><path d="M2 3.6 L8 9.4 L14 3.6" fill="#fdf0b0" stroke="#dfa738" stroke-width="1"/><path d="M2 13 L6 9 M14 13 L10 9" stroke="#ecc152" stroke-width="0.8"/></svg>
<span class="t" style="left:425.2px;top:469.0px;font-size:11px;color:#1e1e1e;transform:scaleX(0.9822);">20220405-103718 - dodanie.msg</span>
<span class="t" style="left:874.5px;top:469.0px;font-size:11px;color:#1e1e1e;transform:scaleX(1.0415);">08.11.2022</span>
<div class="vl" style="left:233px;top:489px;height:23px"></div>
<div class="vl" style="left:398px;top:489px;height:23px"></div>
<div class="vl" style="left:399px;top:489px;height:23px"></div>
<div class="vl" style="left:419px;top:489px;height:23px"></div>
<div class="vl" style="left:775px;top:489px;height:23px"></div>
<div class="vl" style="left:868px;top:489px;height:23px"></div>
<div class="vl" style="left:1002px;top:489px;height:23px"></div>
<div class="hl" style="left:233px;top:511px;width:770px"></div>
<span class="t" style="left:239.6px;top:492.0px;font-size:11px;color:#1e1e1e;transform:scaleX(0.9115);">Maily</span>
<svg style="left:401.8px;top:492px" width="16" height="16" viewBox="0 0 16 16"><rect x="1.4" y="3" width="13.2" height="10.6" rx="0.8" fill="#fbe27c" stroke="#c9a552" stroke-width="1"/><path d="M2 3.6 L8 9.4 L14 3.6" fill="#fdf0b0" stroke="#dfa738" stroke-width="1"/><path d="M2 13 L6 9 M14 13 L10 9" stroke="#ecc152" stroke-width="0.8"/></svg>
<span class="t" style="left:425.2px;top:492.0px;font-size:11px;color:#1e1e1e;transform:scaleX(0.9804);">20220405-103718 - plán 2023.msg</span>
<span class="t" style="left:874.5px;top:492.0px;font-size:11px;color:#1e1e1e;transform:scaleX(1.0415);">08.11.2022</span>
<div class="vl" style="left:233px;top:512px;height:23px"></div>
<div class="vl" style="left:398px;top:512px;height:23px"></div>
<div class="vl" style="left:399px;top:512px;height:23px"></div>
<div class="vl" style="left:419px;top:512px;height:23px"></div>
<div class="vl" style="left:775px;top:512px;height:23px"></div>
<div class="vl" style="left:868px;top:512px;height:23px"></div>
<div class="vl" style="left:1002px;top:512px;height:23px"></div>
<div class="hl" style="left:233px;top:534px;width:770px"></div>
<span class="t" style="left:239.6px;top:515.0px;font-size:11px;color:#1e1e1e;transform:scaleX(0.9115);">Maily</span>
<svg style="left:401.8px;top:515px" width="16" height="16" viewBox="0 0 16 16"><rect x="1.4" y="3" width="13.2" height="10.6" rx="0.8" fill="#fbe27c" stroke="#c9a552" stroke-width="1"/><path d="M2 3.6 L8 9.4 L14 3.6" fill="#fdf0b0" stroke="#dfa738" stroke-width="1"/><path d="M2 13 L6 9 M14 13 L10 9" stroke="#ecc152" stroke-width="0.8"/></svg>
<span class="t" style="left:425.2px;top:515.0px;font-size:11px;color:#1e1e1e;transform:scaleX(1.0000);">20220405-103718 stav zo stavby.msg</span>
<span class="t" style="left:874.5px;top:515.0px;font-size:11px;color:#1e1e1e;transform:scaleX(1.0415);">08.11.2022</span>
<div class="vl" style="left:233px;top:535px;height:51px"></div>
<div class="vl" style="left:398px;top:535px;height:51px"></div>
<div class="vl" style="left:399px;top:535px;height:51px"></div>
<div class="vl" style="left:419px;top:535px;height:51px"></div>
<div class="vl" style="left:775px;top:535px;height:51px"></div>
<div class="vl" style="left:868px;top:535px;height:51px"></div>
<div class="hl2" style="left:233px;top:584px;width:1046px"></div>
<svg style="left:242.2px;top:566.7px" width="8" height="6" viewBox="0 0 8 6"><path d="M0.9 1.2 L3.75 4.1 L6.6 1.2" fill="none" stroke="#3d4d86" stroke-width="1.45"/></svg>
<span class="t" style="left:258.3px;top:560.7px;font-size:11px;color:#3d4d86;font-weight:bold;transform:scaleX(1.0837);">Objednávky ND&nbsp; (3)</span>
<div class="vl" style="left:233px;top:586px;height:24px"></div>
<div class="vl" style="left:398px;top:586px;height:24px"></div>
<div class="vl" style="left:399px;top:586px;height:24px"></div>
<div class="vl" style="left:419px;top:586px;height:24px"></div>
<div class="vl" style="left:775px;top:586px;height:24px"></div>
<div class="vl" style="left:868px;top:586px;height:24px"></div>
<div class="vl" style="left:1002px;top:586px;height:24px"></div>
<div class="hl" style="left:233px;top:609px;width:770px"></div>
<span class="t" style="left:239.6px;top:590.0px;font-size:11px;color:#1e1e1e;transform:scaleX(0.9734);">Objednávky ND</span>
<svg style="left:401.8px;top:590px" width="16" height="16" viewBox="0 0 16 16"><path d="M4.5 0.8 H11.6 L15.2 4.2 V15.2 H4.5 Z" fill="#fdfdfd" stroke="#85888f" stroke-width="0.9"/><path d="M11.6 0.8 V4.2 H15.2" fill="none" stroke="#85888f" stroke-width="0.8"/><path d="M9 5.4 H14 M9 7.4 H14 M9 9.4 H14 M9 11.4 H14 M9 13.2 H14" stroke="#9a9da6" stroke-width="0.9"/><rect x="0.4" y="3.4" width="8" height="10.4" fill="#2453a8"/><path d="M1.6 6.4 L2.9 11 L4.4 7.4 L5.9 11 L7.2 6.4" stroke="#fff" stroke-width="1.1" fill="none"/></svg>
<span class="t" style="left:425.2px;top:590.0px;font-size:11px;color:#1e1e1e;transform:scaleX(1.0003);">kasa dotyk.docx</span>
<span class="t" style="left:874.5px;top:590.0px;font-size:11px;color:#1e1e1e;transform:scaleX(1.0415);">11.02.2020</span>
<div class="vl" style="left:233px;top:610px;height:23px"></div>
<div class="vl" style="left:398px;top:610px;height:23px"></div>
<div class="vl" style="left:399px;top:610px;height:23px"></div>
<div class="vl" style="left:419px;top:610px;height:23px"></div>
<div class="vl" style="left:775px;top:610px;height:23px"></div>
<div class="vl" style="left:868px;top:610px;height:23px"></div>
<div class="vl" style="left:1002px;top:610px;height:23px"></div>
<div class="hl" style="left:233px;top:632px;width:770px"></div>
<span class="t" style="left:239.6px;top:613.0px;font-size:11px;color:#1e1e1e;transform:scaleX(0.9734);">Objednávky ND</span>
<svg style="left:401.8px;top:613px" width="16" height="16" viewBox="0 0 16 16"><rect x="1.4" y="3" width="13.2" height="10.6" rx="0.8" fill="#fbe27c" stroke="#c9a552" stroke-width="1"/><path d="M2 3.6 L8 9.4 L14 3.6" fill="#fdf0b0" stroke="#dfa738" stroke-width="1"/><path d="M2 13 L6 9 M14 13 L10 9" stroke="#ecc152" stroke-width="0.8"/></svg>
<span class="t" style="left:425.2px;top:613.0px;font-size:11px;color:#1e1e1e;transform:scaleX(0.9413);">Nová úloha z CRM_ ivka posím ťa ozvi sa mu VTZ - Vladimír Pilárik.msg</span>
<span class="t" style="left:782.7px;top:613.0px;font-size:11px;color:#1e1e1e;transform:scaleX(0.9691);">Od: SunSoft, K...</span>
<span class="t" style="left:874.5px;top:613.0px;font-size:11px;color:#1e1e1e;transform:scaleX(1.0261);">19.10.2020</span>
<div class="vl" style="left:233px;top:633px;height:23px"></div>
<div class="vl" style="left:398px;top:633px;height:23px"></div>
<div class="vl" style="left:399px;top:633px;height:23px"></div>
<div class="vl" style="left:419px;top:633px;height:23px"></div>
<div class="vl" style="left:775px;top:633px;height:23px"></div>
<div class="vl" style="left:868px;top:633px;height:23px"></div>
<div class="vl" style="left:1002px;top:633px;height:23px"></div>
<div class="hl" style="left:233px;top:655px;width:770px"></div>
<span class="t" style="left:239.6px;top:636.0px;font-size:11px;color:#1e1e1e;transform:scaleX(0.9734);">Objednávky ND</span>
<svg style="left:401.8px;top:636px" width="16" height="16" viewBox="0 0 16 16"><path d="M4.5 0.8 H11.6 L15.2 4.2 V15.2 H4.5 Z" fill="#fdfdfd" stroke="#8e9196" stroke-width="0.9"/><path d="M11.6 0.8 V4.2 H15.2" fill="none" stroke="#8e9196" stroke-width="0.8"/><path d="M11 6 H14 M11 8.2 H14 M11 10.4 H14 M11 12.6 H14" stroke="#6fb98c" stroke-width="1" stroke-dasharray="1.2 0.6"/><rect x="0.9" y="3.8" width="9" height="9.4" fill="#eef7f0" stroke="#1f7a43" stroke-width="1.1"/><path d="M2.4 5.4 L8.4 11.6 M8.4 5.4 L2.4 11.6" stroke="#1f7a43" stroke-width="1.4"/><path d="M0.9 10.6 H9.9" stroke="#1f7a43" stroke-width="0.7"/></svg>
<span class="t" style="left:425.2px;top:636.0px;font-size:11px;color:#1e1e1e;transform:scaleX(0.9944);">objednavka husquarna.xls</span>
<span class="t" style="left:874.5px;top:636.0px;font-size:11px;color:#1e1e1e;transform:scaleX(1.0261);">12.10.2017</span>
<div class="vl" style="left:233px;top:656px;height:51px"></div>
<div class="vl" style="left:398px;top:656px;height:51px"></div>
<div class="vl" style="left:399px;top:656px;height:51px"></div>
<div class="vl" style="left:419px;top:656px;height:51px"></div>
<div class="vl" style="left:775px;top:656px;height:51px"></div>
<div class="vl" style="left:868px;top:656px;height:51px"></div>
<div class="hl2" style="left:233px;top:705px;width:1046px"></div>
<svg style="left:243.2px;top:686.2px" width="6" height="8" viewBox="0 0 6 8"><path d="M1.1 1 L4 3.9 L1.1 6.8" fill="none" stroke="#3d4d86" stroke-width="1.45"/></svg>
<span class="t" style="left:258.3px;top:681.7px;font-size:11px;color:#3d4d86;font-weight:bold;transform:scaleX(1.1368);">Objekty&nbsp; (2)</span>
<div class="vl" style="left:233px;top:707px;height:51px"></div>
<div class="vl" style="left:398px;top:707px;height:51px"></div>
<div class="vl" style="left:399px;top:707px;height:51px"></div>
<div class="vl" style="left:419px;top:707px;height:51px"></div>
<div class="vl" style="left:775px;top:707px;height:51px"></div>
<div class="vl" style="left:868px;top:707px;height:51px"></div>
<div class="hl2" style="left:233px;top:756px;width:1046px"></div>
<svg style="left:242.2px;top:738.7px" width="8" height="6" viewBox="0 0 8 6"><path d="M0.9 1.2 L3.75 4.1 L6.6 1.2" fill="none" stroke="#3d4d86" stroke-width="1.45"/></svg>
<span class="t" style="left:258.3px;top:732.7px;font-size:11px;color:#3d4d86;font-weight:bold;transform:scaleX(1.1029);">Ponuky&nbsp; (1)</span>
<div class="vl" style="left:233px;top:758px;height:23px"></div>
<div class="vl" style="left:398px;top:758px;height:23px"></div>
<div class="vl" style="left:399px;top:758px;height:23px"></div>
<div class="vl" style="left:419px;top:758px;height:23px"></div>
<div class="vl" style="left:775px;top:758px;height:23px"></div>
<div class="vl" style="left:868px;top:758px;height:23px"></div>
<div class="vl" style="left:1002px;top:758px;height:23px"></div>
<div class="hl" style="left:233px;top:780px;width:770px"></div>
<span class="t" style="left:239.6px;top:761.0px;font-size:11px;color:#1e1e1e;transform:scaleX(0.9590);">Ponuky</span>
<svg style="left:401.8px;top:761px" width="16" height="16" viewBox="0 0 16 16"><path d="M4.5 0.8 H11.6 L15.2 4.2 V15.2 H4.5 Z" fill="#fdfdfd" stroke="#9a9da3" stroke-width="0.9"/><path d="M11.6 0.8 V4.2 H15.2" fill="none" stroke="#9a9da3" stroke-width="0.8"/><path d="M10 6 H14 M10 8.2 H14 M10 10.4 H14 M10 12.6 H14" stroke="#8fcaa5" stroke-width="1" stroke-dasharray="1.2 0.6"/><rect x="0.6" y="3.6" width="8.4" height="9.6" fill="#1f7a43"/><path d="M2.8 5.8 L6.8 11 M6.8 5.8 L2.8 11" stroke="#fff" stroke-width="1.4"/></svg>
<span class="t" style="left:425.2px;top:761.0px;font-size:11px;color:#1e1e1e;transform:scaleX(0.9561);">Cenová ponuka SunSoft VTZ_VZOR.xlsx</span>
<span class="t" style="left:874.5px;top:761.0px;font-size:11px;color:#1e1e1e;transform:scaleX(1.0261);">06.12.2022</span>
<div class="vl" style="left:233px;top:781px;height:51px"></div>
<div class="vl" style="left:398px;top:781px;height:51px"></div>
<div class="vl" style="left:399px;top:781px;height:51px"></div>
<div class="vl" style="left:419px;top:781px;height:51px"></div>
<div class="vl" style="left:775px;top:781px;height:51px"></div>
<div class="vl" style="left:868px;top:781px;height:51px"></div>
<div class="hl2" style="left:233px;top:830px;width:1046px"></div>
<svg style="left:242.2px;top:812.7px" width="8" height="6" viewBox="0 0 8 6"><path d="M0.9 1.2 L3.75 4.1 L6.6 1.2" fill="none" stroke="#3d4d86" stroke-width="1.45"/></svg>
<span class="t" style="left:258.3px;top:806.7px;font-size:11px;color:#3d4d86;font-weight:bold;transform:scaleX(1.0697);">Ponuky od dod&nbsp; (3)</span>
<div class="vl" style="left:233px;top:832px;height:24px"></div>
<div class="vl" style="left:398px;top:832px;height:24px"></div>
<div class="vl" style="left:399px;top:832px;height:24px"></div>
<div class="vl" style="left:419px;top:832px;height:24px"></div>
<div class="vl" style="left:775px;top:832px;height:24px"></div>
<div class="vl" style="left:868px;top:832px;height:24px"></div>
<div class="vl" style="left:1002px;top:832px;height:24px"></div>
<div class="hl" style="left:233px;top:855px;width:770px"></div>
<span class="t" style="left:239.6px;top:836.0px;font-size:11px;color:#1e1e1e;transform:scaleX(0.9865);">Ponuky od dod</span>
<svg style="left:401.8px;top:836px" width="16" height="16" viewBox="0 0 16 16"><path d="M4.5 0.8 H11.6 L15.2 4.2 V15.2 H4.5 Z" fill="#fdfdfd" stroke="#9a9da3" stroke-width="0.9"/><path d="M11.6 0.8 V4.2 H15.2" fill="none" stroke="#9a9da3" stroke-width="0.8"/><path d="M10 6 H14 M10 8.2 H14 M10 10.4 H14 M10 12.6 H14" stroke="#8fcaa5" stroke-width="1" stroke-dasharray="1.2 0.6"/><rect x="0.6" y="3.6" width="8.4" height="9.6" fill="#1f7a43"/><path d="M2.8 5.8 L6.8 11 M6.8 5.8 L2.8 11" stroke="#fff" stroke-width="1.4"/></svg>
<span class="t" style="left:425.2px;top:836.0px;font-size:11px;color:#1e1e1e;transform:scaleX(0.9048);">Cenová ponuka EcoSun produkcia dodávateľ.xlsx</span>
<span class="t" style="left:874.5px;top:836.0px;font-size:11px;color:#1e1e1e;transform:scaleX(1.0261);">28.05.2018</span>
<div class="sbar"></div><div class="thumb"></div>
<svg style="left:1284px;top:227.5px" width="7" height="5" viewBox="0 0 7 5"><path d="M0 4.6 H7 L3.5 0.2 Z" fill="#3a3a3a"/></svg>
<svg style="left:1284px;top:829px" width="7" height="5" viewBox="0 0 7 5"><path d="M0 0.4 H7 L3.5 4.8 Z" fill="#3a3a3a"/></svg>
<div style="left:1283px;top:685px;width:9px;height:2px;background:#2e8b2e"></div>
<div class="foot"></div>
<span class="t" style="left:215.7px;top:846.0px;font-size:11px;color:#1e1e1e;transform:scaleX(0.9504);">180 záznamov</span>
<svg style="left:302px;top:847px" width="16" height="14" viewBox="0 0 16 14"><path d="M0.7 0.7 H15.3 L9.6 7.2 V13 L6.4 11.2 V7.2 Z" fill="#f2f2f2" stroke="#8a8a8a" stroke-width="1.2" stroke-linejoin="round"/></svg>
<svg style="left:334.3px;top:853px" width="6" height="3" viewBox="0 0 6 3"><path d="M0 0 H6 L3 3 Z" fill="#222"/></svg>
<svg style="left:356.5px;top:846.5px" width="17" height="16" viewBox="0 0 17 16"><path d="M1.6 3 H5 L5.8 11 H0.6 Z" fill="#f4f7fd" stroke="#5b78b5" stroke-width="0.9"/><path d="M7 3 H10.4 L11 7 H6.6 Z" fill="#f4f7fd" stroke="#5b78b5" stroke-width="0.9"/><rect x="2" y="1" width="2.6" height="2" fill="#5b78b5"/><rect x="7.4" y="1" width="2.6" height="2" fill="#5b78b5"/><rect x="7" y="8" width="9" height="7.4" fill="#4a5266" stroke="#2f3546" stroke-width="0.8"/><path d="M9 8 V6.4 C9 4 14 4 14 6.4 V8" fill="none" stroke="#4a5266" stroke-width="1.2"/><rect x="9.5" y="10" width="4" height="3.4" fill="#e9ebf2"/></svg>
<div style="left:489px;top:158px;width:216px;height:52px;background:#fdfdfd;border:1px solid #cdd2e4;box-shadow:2px 2px 2px rgba(50,55,80,0.55)"></div>
<span class="t" style="left:499.8px;top:165.7px;font-size:11px;color:#1a1a1a;font-weight:bold;transform:scaleX(1.1040);">Obnovit údaje z databázy (Ctrl+R)</span>
<span class="t" style="left:505.4px;top:184.6px;font-size:11px;color:#1a1a1a;transform:scaleX(0.9862);">Načíta aktuálne dáta z databázy</span>
<div class="status"></div>
<svg style="left:8px;top:880px" width="17" height="16" viewBox="0 0 17 16"><circle cx="11" cy="3.6" r="2.8" fill="#f0b060" stroke="#b8742a" stroke-width="0.6"/><path d="M6.6 12 C6.6 6.4 15.4 6.4 15.4 12 V15 H6.6 Z" fill="#4f86dc" stroke="#2f62b8" stroke-width="0.6"/><circle cx="4" cy="7.6" r="3.3" fill="none" stroke="#f2f2f2" stroke-width="1.8"/><path d="M6.4 9.8 L10.6 13.8 M9 12.4 L7.6 13.8" stroke="#f2f2f2" stroke-width="1.8"/></svg>
<span class="t" style="left:27.3px;top:880.3px;font-size:11px;color:#f4f6ff;transform:scaleX(0.9688);">Dudášová</span>
<svg style="left:92.5px;top:882px" width="15" height="12" viewBox="0 0 15 12"><rect width="15" height="12" fill="#fff"/><rect y="4" width="15" height="4" fill="#2a4fb0"/><rect y="8" width="15" height="4" fill="#e0202a"/><path d="M3 2.5 H8 V7 C8 8.8 5.5 9.8 5.5 9.8 C5.5 9.8 3 8.8 3 7 Z" fill="#e0202a" stroke="#fff" stroke-width="0.6"/><path d="M5.5 3.5 V8 M4.2 5 H6.8 M4.5 6.3 H6.5" stroke="#fff" stroke-width="0.7"/></svg>
<svg style="left:126px;top:880px" width="13" height="16" viewBox="0 0 13 16"><path d="M0.8 2.6 V13.4 C0.8 16 12.2 16 12.2 13.4 V2.6 Z" fill="#e9b52c" stroke="#b8820e" stroke-width="0.8"/><ellipse cx="6.5" cy="2.6" rx="5.7" ry="2" fill="#fbe08a" stroke="#b8820e" stroke-width="0.8"/><path d="M0.8 6.2 C0.8 8.8 12.2 8.8 12.2 6.2 M0.8 9.8 C0.8 12.4 12.2 12.4 12.2 9.8" fill="none" stroke="#b8820e" stroke-width="0.8"/></svg>
<span class="t" style="left:143.6px;top:880.3px;font-size:11px;color:#f4f6ff;transform:scaleX(0.9771);">IVANAD test (MySQL/IVANADtest, V2578)</span>
<div class="vl" style="left:355px;top:877px;height:21px;background:#525f8d"></div>
<svg style="left:365px;top:882px" width="13" height="13" viewBox="0 0 13 13"><circle cx="6.5" cy="6.5" r="6" fill="#e8963c" stroke="#b86a1e" stroke-width="0.8"/><circle cx="6.5" cy="6.5" r="3.8" fill="#f6c27a"/><path d="M4.3 6.5 L6 8.3 L9 4.8" stroke="#fff" stroke-width="1.5" fill="none"/></svg>
<span class="t" style="left:383.7px;top:880.3px;font-size:11px;color:#f4f6ff;transform:scaleX(1.0087);">2.32.682</span>
<div class="vl" style="left:436px;top:877px;height:21px;background:#525f8d"></div>
<svg style="left:445px;top:880px" width="16" height="16" viewBox="0 0 16 16"><rect x="0.8" y="0.8" width="11.4" height="12.4" fill="#fafafa" stroke="#8a8a8a" stroke-width="0.9"/><path d="M2.8 3 H6 M7.6 3 H10.2 M2.8 5 H10.2" stroke="#6a9a5a" stroke-width="1.1"/><circle cx="4.6" cy="9" r="2" fill="#e0262b"/><path d="M3.4 10.4 L3 14.4 L4.6 13 L6.2 14.4 L5.8 10.4" fill="#e0262b"/><circle cx="11.6" cy="11.6" r="4" fill="#3aae2a" stroke="#1d7d12" stroke-width="0.7"/><path d="M9.6 11.6 L11.2 13.2 L13.8 10" stroke="#fff" stroke-width="1.4" fill="none"/></svg>
<svg style="left:1125px;top:880px" width="15" height="15" viewBox="0 0 15 15"><rect x="0.8" y="1.6" width="10.6" height="12.8" fill="#fbfbfb" stroke="#9a9a9a" stroke-width="0.9"/><path d="M2.4 4.4 L3.4 5.6 L5.2 3 M2.4 8 L3.4 9.2 L5.2 6.6 M2.4 11.4 L3.4 12.6 L5.2 10" stroke="#d8262c" stroke-width="1.1" fill="none"/><path d="M6.4 4.6 H9.6 M6.4 8.2 H9 M6.4 11.6 H8" stroke="#a5a5a5" stroke-width="1"/><path d="M6.6 13.8 L7.4 10.8 L13 3.2 L15 4.8 L9.4 12.4 Z" fill="#f4b73a" stroke="#a8701a" stroke-width="0.7"/><path d="M13 3.2 L14 1.8 L16 3.4 L15 4.8 Z" fill="#e05a5a"/></svg>
<span class="t" style="left:1145.6px;top:879.5px;font-size:11px;color:#f4f6ff;transform:scaleX(0.9585);">7 dokončených úloh</span>
<svg style="left:1290.5px;top:886px" width="6" height="3" viewBox="0 0 6 3"><path d="M0 0 H6 L3 3 Z" fill="#f4f6ff"/></svg>
</body>
</html>
